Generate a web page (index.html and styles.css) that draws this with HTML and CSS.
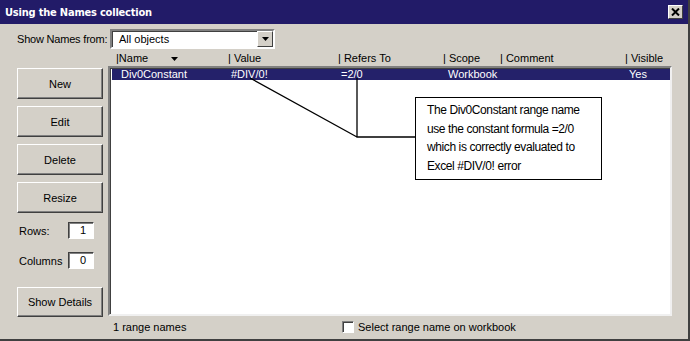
FILE: index.html
```html
<!DOCTYPE html>
<html>
<head>
<meta charset="utf-8">
<link rel="stylesheet" href="styles.css">
</head>
<body>
<div class="dialog">
  <div class="titlebar">
    <span class="title">Using the Names collection</span>
    <span class="close"><svg width="9" height="8" viewBox="0 0 9 8"><path d="M1 0.5 L8 7.5 M8 0.5 L1 7.5" stroke="#000" stroke-width="2"/></svg></span>
  </div>
  <div class="combo-row">
    <span class="combo-label">Show Names from:</span>
    <div class="combo">
      <span class="combo-text">All objects</span>
      <span class="combo-btn"><svg width="7" height="4" viewBox="0 0 7 4"><path d="M0 0 H7 L3.5 4 Z" fill="#000"/></svg></span>
    </div>
  </div>
  <div class="main">
    <div class="left">
      <button class="btn">New</button>
      <button class="btn">Edit</button>
      <button class="btn">Delete</button>
      <button class="btn">Resize</button>
      <div class="field"><span class="field-label">Rows:</span><span class="field-box">1</span></div>
      <div class="field"><span class="field-label">Columns</span><span class="field-box">0</span></div>
      <button class="btn btn-details">Show Details</button>
    </div>
    <div class="right">
      <div class="header">
        <span class="col c-name">|Name <svg class="sort" width="7" height="4" viewBox="0 0 7 4"><path d="M0 0 H7 L3.5 4 Z" fill="#000"/></svg></span>
        <span class="col c-value">| Value</span>
        <span class="col c-refers">| Refers To</span>
        <span class="col c-scope">| Scope</span>
        <span class="col c-comment">| Comment</span>
        <span class="col c-visible">| Visible</span>
      </div>
      <div class="list">
        <div class="row selected">
          <span class="cell c-name">Div0Constant</span>
          <span class="cell c-value">#DIV/0!</span>
          <span class="cell c-refers">=2/0</span>
          <span class="cell c-scope">Workbook</span>
          <span class="cell c-comment"></span>
          <span class="cell c-visible">Yes</span>
        </div>
      </div>
    </div>
  </div>
  <div class="status">
    <span class="count">1 range names</span>
    <span class="check"></span>
    <span class="check-label">Select range name on workbook</span>
  </div>
  <svg class="callout-lines" width="690" height="341" viewBox="0 0 690 341">
    <path d="M250 78 L357 137 M357 78 V137 H415" stroke="#000" stroke-width="1.3" fill="none"/>
  </svg>
  <div class="note">The Div0Constant range name use the constant formula =2/0 which is correctly evaluated to Excel #DIV/0! error</div>
</div>
</body>
</html>
```
FILE: styles.css
```css
* { box-sizing: border-box; }
html, body { margin: 0; padding: 0; }
body { width: 690px; height: 341px; overflow: hidden; background: #d4d0c8; }
.dialog {
  position: relative;
  width: 690px;
  height: 341px;
  background: #d4d0c8;
  border-right: 2px solid #404040;
  border-bottom: 2px solid #404040;
  display: flex;
  flex-direction: column;
  font-family: "Liberation Sans", Arial, sans-serif;
  font-size: 11px;
  color: #000;
}
.titlebar {
  height: 24px;
  background: #221b68;
  display: flex;
  align-items: center;
  justify-content: space-between;
  padding: 0 5px 0 5px;
  flex-shrink: 0;
}
.title {
  color: #fff;
  font-weight: bold;
  font-size: 11px;
  letter-spacing: -0.2px;
  font-family: "DejaVu Sans Condensed", "DejaVu Sans", sans-serif;
}
.close {
  width: 15px;
  height: 14px;
  background: #d4d0c8;
  border: 1px solid;
  border-color: #fff #404040 #404040 #fff;
  display: flex;
  align-items: center;
  justify-content: center;
}
.combo-row {
  margin-top: 5px;
  height: 20px;
  display: flex;
  align-items: center;
  padding-left: 17px;
  flex-shrink: 0;
}
.combo-label { width: 93px; flex-shrink: 0; white-space: nowrap; letter-spacing: -0.2px; }
.combo {
  width: 165px;
  flex-shrink: 0;
  height: 20px;
  background: #fff;
  border: 2px solid;
  border-color: #808080 #fff #fff #808080;
  box-shadow: inset 1px 1px #404040;
  display: flex;
  align-items: center;
  justify-content: space-between;
  padding-left: 7px;
}
.combo-btn {
  width: 16px;
  height: 16px;
  background: #d4d0c8;
  border: 1px solid;
  border-color: #fff #404040 #404040 #fff;
  display: flex;
  align-items: center;
  justify-content: center;
}
.main { display: flex; height: 267px; flex-shrink: 0; }
.left {
  width: 108px;
  padding: 19px 0 0 17px;
  display: flex;
  flex-direction: column;
}
.left > * { flex-shrink: 0; }
.btn {
  width: 86px;
  height: 31px;
  margin: 0 0 7px 0;
  padding: 0;
  background: #d4d0c8;
  border: 1px solid;
  border-color: #fff #404040 #404040 #fff;
  box-shadow: inset -1px -1px #808080;
  font-family: "Liberation Sans", Arial, sans-serif;
  font-size: 11px;
  color: #000;
}
.field {
  display: flex;
  align-items: center;
  height: 17px;
  margin-top: 2px;
  margin-bottom: 11px;
}
.field-label { width: 51px; padding-left: 2px; }
.field-box {
  width: 26px;
  height: 17px;
  background: #fff;
  border: 1px solid;
  border-color: #404040 #fff #fff #404040;
  box-shadow: 1px 1px #808080 inset;
  text-align: right;
  padding-right: 7px;
  line-height: 15px;
}
.btn-details { margin-top: 7px; margin-bottom: 0; height: 30px; }
.right {
  width: 564px;
  display: flex;
  flex-direction: column;
}
.header {
  height: 17px;
  display: flex;
  align-items: center;
  padding-left: 8px;
  padding-top: 1px;
}
.col { white-space: nowrap; }
.sort { margin-left: 20px; vertical-align: middle; }
.c-name { width: 112px; }
.c-value { width: 110px; }
.c-refers { width: 105px; }
.c-scope { width: 57px; }
.c-comment { width: 125px; }
.c-visible { flex: 1; }
.list {
  height: 250px;
  background: #fff;
  border: 2px solid;
  border-color: #808080 #f0f0f0 #f0f0f0 #808080;
  box-shadow: inset 1px 1px #404040;
  padding: 1px 0 0 2px;
}
.row {
  height: 11px;
  line-height: 11px;
  display: flex;
  padding-left: 9px;
}
.selected { background: #24216a; color: #fff; }
.cell { white-space: nowrap; }
.row .c-name { width: 110px; }
.row .c-value { width: 110px; }
.row .c-refers { width: 107px; }
.row .c-scope { width: 57px; }
.row .c-comment { width: 124px; }
.status {
  height: 22px;
  display: flex;
  align-items: center;
  padding-left: 113px;
  flex-shrink: 0;
}
.count { width: 229px; }
.check {
  width: 12px;
  height: 12px;
  background: #fff;
  border: 1px solid;
  border-color: #808080 #fff #fff #808080;
  box-shadow: inset 1px 1px #404040;
  margin-right: 4px;
}
.callout-lines { position: absolute; left: 0; top: 0; pointer-events: none; }
.note {
  position: absolute;
  left: 415px;
  top: 97px;
  width: 187px;
  height: 83px;
  background: #fff;
  border: 1px solid #000;
  padding: 3px 8px 0 11px;
  font-family: "Liberation Sans", Arial, sans-serif;
  font-size: 12px;
  letter-spacing: -0.4px;
  line-height: 18.5px;
  color: #000;
}
```
